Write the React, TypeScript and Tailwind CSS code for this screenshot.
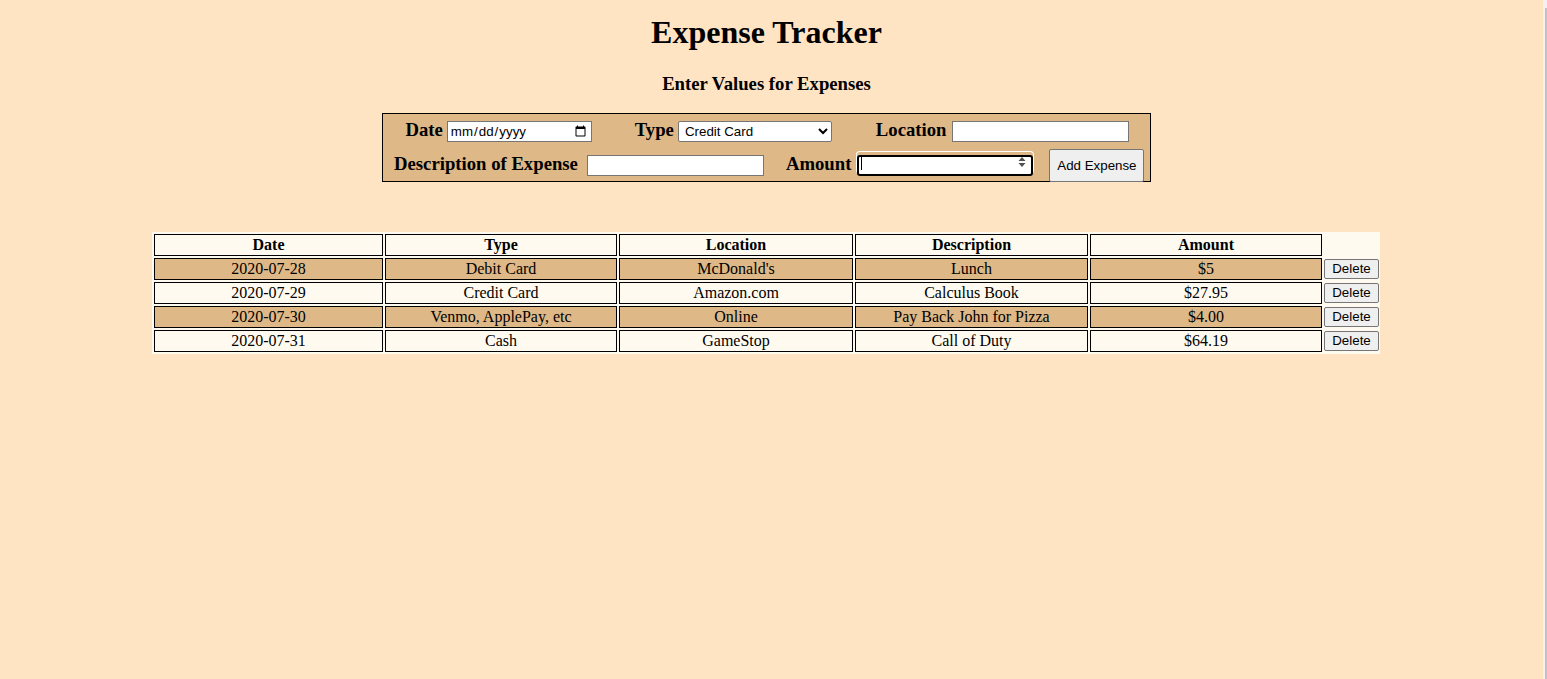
import React from 'react';

interface Expense {
  date: string;
  type: string;
  location: string;
  description: string;
  amount: string;
}

const expenses: Expense[] = [
  { date: '2020-07-28', type: 'Debit Card', location: "McDonald's", description: 'Lunch', amount: '$5' },
  { date: '2020-07-29', type: 'Credit Card', location: 'Amazon.com', description: 'Calculus Book', amount: '$27.95' },
  { date: '2020-07-30', type: 'Venmo, ApplePay, etc', location: 'Online', description: 'Pay Back John for Pizza', amount: '$4.00' },
  { date: '2020-07-31', type: 'Cash', location: 'GameStop', description: 'Call of Duty', amount: '$64.19' },
];

const labelCls = "text-[18.72px] leading-[22px] font-bold font-['Liberation_Serif',serif]";
const inputCls =
  "h-[21px] bg-white border border-[#767676] px-[2px] text-[13.33px] font-['Liberation_Sans',Arial,sans-serif] text-black";

const ExpenseForm: React.FC = () => {
  return (
    <div className="w-[769px] h-[69px] border border-black bg-[#deb887] flex flex-col pt-[5px]">
      {/* first row */}
      <div className="flex items-baseline justify-around pl-[1px]">
        <div className="flex items-baseline gap-[4px]">
          <span className={labelCls}>Date</span>
          <input type="date" className={`${inputCls} w-[145px] font-['Liberation_Mono',monospace]`} />
        </div>
        <div className="flex items-baseline gap-[4px] mr-[1px]">
          <span className={labelCls}>Type</span>
          <select defaultValue="Credit Card" className={`${inputCls} w-[154px] h-[20px] px-0 rounded-[2px]`}>
            <option>Credit Card</option>
            <option>Debit Card</option>
            <option>Cash</option>
            <option>Venmo, ApplePay, etc</option>
          </select>
        </div>
        <div className="flex items-baseline gap-[5px]">
          <span className={labelCls}>Location</span>
          <input type="text" className={`${inputCls} w-[177px]`} />
        </div>
      </div>

      {/* second row */}
      <div className="flex items-baseline mt-[7px] pl-[11px]">
        <div className="flex items-baseline gap-[9px]">
          <span className={labelCls}>Description of Expense</span>
          <input type="text" className={`${inputCls} w-[177px]`} />
        </div>
        <div className="flex items-baseline gap-[6px] ml-[22px]">
          <span className={labelCls}>Amount</span>
          <div className="relative w-[176px] h-[21px] shadow-[0_0_0_1px_white] rounded-[3px]">
            <input
              type="text"
              className="w-full h-full bg-white border-2 border-black rounded-[3px] px-[2px] text-[13.33px] font-['Liberation_Sans',Arial,sans-serif] outline-none"
            />
            <div className="absolute left-[4px] top-[3px] w-[1px] h-[15px] bg-black" />
            <svg className="absolute right-[7px] top-[4px]" width="8" height="12" viewBox="0 0 8 12">
              <path d="M4 1 L7.5 5 H0.5 Z" fill="#505050" />
              <path d="M4 11 L7.5 7 H0.5 Z" fill="#505050" />
            </svg>
          </div>
        </div>
        <button className="ml-[16px] w-[95px] h-[33px] bg-[#efefef] border border-[#767676] rounded-[2px] text-[13.33px] font-['Liberation_Sans',Arial,sans-serif] text-black">
          Add Expense
        </button>
      </div>
    </div>
  );
};

const ExpenseTable: React.FC = () => {
  const cell = 'border border-black px-[1px] py-[1px] text-center';
  return (
    <table className="w-[1228px] table-fixed border-separate border-spacing-[2px] bg-[#fffaf0] text-[16px] leading-[18px] font-['Liberation_Serif',serif] text-black">
      <colgroup>
        <col className="w-[229px]" />
        <col className="w-[232px]" />
        <col className="w-[234px]" />
        <col className="w-[233px]" />
        <col className="w-[232px]" />
        <col />
      </colgroup>
      <thead>
        <tr>
          <th className={`${cell} font-bold`}>Date</th>
          <th className={`${cell} font-bold`}>Type</th>
          <th className={`${cell} font-bold`}>Location</th>
          <th className={`${cell} font-bold`}>Description</th>
          <th className={`${cell} font-bold`}>Amount</th>
          <th />
        </tr>
      </thead>
      <tbody>
        {expenses.map((e, i) => {
          const bg = i % 2 === 0 ? 'bg-[#deb887]' : '';
          return (
            <tr key={e.date}>
              <td className={`${cell} ${bg}`}>{e.date}</td>
              <td className={`${cell} ${bg}`}>{e.type}</td>
              <td className={`${cell} ${bg}`}>{e.location}</td>
              <td className={`${cell} ${bg}`}>{e.description}</td>
              <td className={`${cell} ${bg}`}>{e.amount}</td>
              <td className="p-0 align-middle">
                <button className="w-[55px] h-[20px] bg-[#efefef] border border-[#767676] rounded-[2px] text-[13.33px] leading-[16px] font-['Liberation_Sans',Arial,sans-serif]">
                  Delete
                </button>
              </td>
            </tr>
          );
        })}
      </tbody>
    </table>
  );
};

export default function App() {
  return (
    <div className="flex min-h-screen h-[679px] bg-[#ffe4c4] text-black overflow-hidden">
      <div className="w-[1533px] flex flex-col items-center">
        <h1 className="mt-[14px] text-[32px] leading-[37px] font-bold font-['Liberation_Serif',serif]">Expense Tracker</h1>
        <h3 className="mt-[22px] text-[18.72px] leading-[22px] font-bold font-['Liberation_Serif',serif]">
          Enter Values for Expenses
        </h3>
        <div className="mt-[18px]">
          <ExpenseForm />
        </div>
        <div className="mt-[50px] mr-[1px]">
          <ExpenseTable />
        </div>
      </div>
      <div className="flex-1" />
      {/* scrollbar edge */}
      <div className="w-[4px] flex flex-col">
        <div className="h-[8px] bg-[#f1f1f1]" />
        <div className="flex-1 flex">
          <div className="w-[2px] bg-[#f1f1f1]" />
          <div className="w-[2px] bg-[#c1c1c1]" />
        </div>
      </div>
    </div>
  );
}
